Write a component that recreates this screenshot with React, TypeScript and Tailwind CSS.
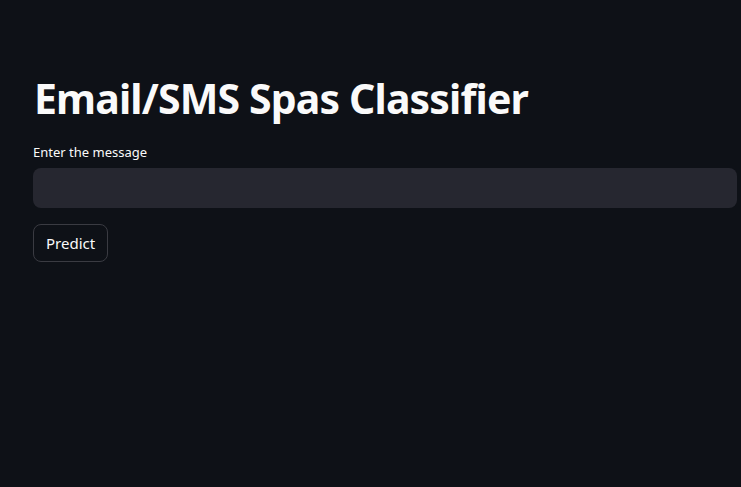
export default function App() {
  return (
    <div className="min-h-[487px] w-full bg-[#0e1117] text-[#fafafa]" style={{ fontFamily: '"Noto Sans", "Open Sans", sans-serif' }}>
      <div className="pl-[33px] pr-[4px] pt-[70px]">
        <h1 className="text-[41px] font-bold leading-[56px] tracking-[-0.85px] pl-[1px]">Email/SMS Spas Classifier</h1>
        <div className="mt-[16px] text-[13px] leading-[20px]">Enter the message</div>
        <div className="mt-[6px] h-[40px] w-full rounded-[8px] bg-[#262730]" />
        <button className="mt-[16px] h-[38px] rounded-[8px] border border-[#3a3b42] bg-[#0e1117] px-[12px] text-[15px] text-[#fafafa]">
          Predict
        </button>
      </div>
    </div>
  );
}
